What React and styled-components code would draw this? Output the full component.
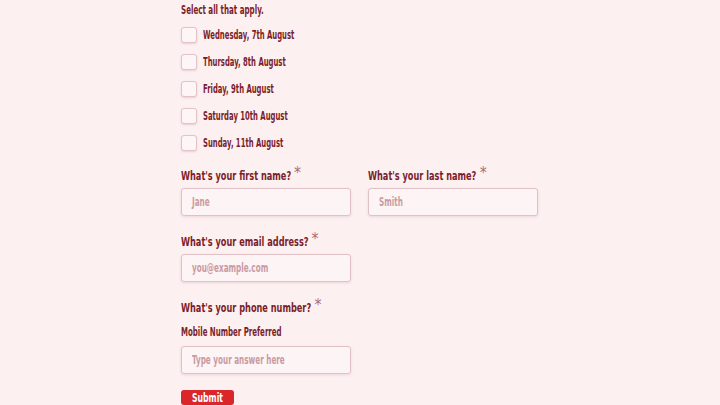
import React from "react";
import styled, { createGlobalStyle } from "styled-components";

const GlobalStyle = createGlobalStyle`
  html, body {
    margin: 0;
    padding: 0;
    background: #fdf0f1;
  }
  body {
    font-family: "DejaVu Sans Condensed", "DejaVu Sans", sans-serif;
    font-stretch: condensed;
    color: #7a1d2a;
  }
`;

const days = [
  "Wednesday, 7th August",
  "Thursday, 8th August",
  "Friday, 9th August",
  "Saturday 10th August",
  "Sunday, 11th August",
];

// squeezes the text to get near the tall, narrow face of the original
const Narrow = styled.span`
  display: inline-block;
  white-space: nowrap;
  transform: scaleX(${(p) => p.$scale || 0.68});
  transform-origin: left center;
`;

const Page = styled.div`
  width: 720px;
  height: 405px;
  overflow: hidden;
  padding: 2px 0 0 181px;
  box-sizing: border-box;
  display: flex;
  flex-direction: column;
  align-items: flex-start;
`;

const Hint = styled.p`
  margin: 0 0 9px;
  font-size: 12px;
  font-weight: bold;
  line-height: 16px;
`;

const CheckList = styled.div`
  display: flex;
  flex-direction: column;
  gap: 11px;
  margin-bottom: 15px;
`;

const CheckRow = styled.label`
  display: flex;
  align-items: center;
  gap: 6px;
  font-size: 12px;
  font-weight: bold;
  height: 16px;
`;

const Box = styled.span`
  width: 16px;
  height: 16px;
  box-sizing: border-box;
  border: 1px solid #e2c3c8;
  border-radius: 3px;
  background: #fdf5f6;
  box-shadow: 0 1px 2px rgba(122, 29, 42, 0.15);
  flex-shrink: 0;
`;

const Row = styled.div`
  display: flex;
  gap: 17px;
`;

const Field = styled.div`
  width: 170px;
  display: flex;
  flex-direction: column;
  margin-bottom: 16px;
`;

const Label = styled.div`
  font-size: 13px;
  font-weight: bold;
  line-height: 20px;
  height: 20px;
  margin-bottom: 2px;
`;

const Star = styled.span`
  display: inline-block;
  color: #a56e77;
  font-size: 16px;
  font-weight: normal;
  vertical-align: top;
  line-height: 13px;
  margin-left: 6px;
  transform: scaleX(1.4);
`;

const Sub = styled.div`
  font-size: 12px;
  font-weight: bold;
  line-height: 16px;
  margin: 4px 0 6px;
`;

const Input = styled.div`
  width: 170px;
  height: 28px;
  box-sizing: border-box;
  border: 1px solid #e2c1c6;
  border-radius: 3px;
  background: #fdf4f5;
  box-shadow: 0 1px 3px rgba(122, 29, 42, 0.12);
  padding: 0 10px;
  display: flex;
  align-items: center;
  font-size: 12px;
  font-weight: bold;
  color: #c99aa2;
`;

const Submit = styled.button`
  background: #d8262b;
  color: #fff;
  border: none;
  border-radius: 3px;
  width: 53px;
  height: 32px;
  padding: 0 0 0 11px;
  text-align: left;
  font-family: inherit;
  font-stretch: condensed;
  font-weight: bold;
  font-size: 13px;
`;

const Question = ({ label, sub, placeholder }) => (
  <Field>
    <Label>
      <Narrow $scale={0.7}>
        {label}
        <Star>*</Star>
      </Narrow>
    </Label>
    {sub && (
      <Sub>
        <Narrow $scale={0.65}>{sub}</Narrow>
      </Sub>
    )}
    <Input>
      <Narrow $scale={0.67}>{placeholder}</Narrow>
    </Input>
  </Field>
);

export default function App() {
  return (
    <Page>
      <GlobalStyle />
      <Hint>
        <Narrow $scale={0.66}>Select all that apply.</Narrow>
      </Hint>
      <CheckList>
        {days.map((d) => (
          <CheckRow key={d}>
            <Box />
            <Narrow $scale={0.635}>{d}</Narrow>
          </CheckRow>
        ))}
      </CheckList>
      <Row>
        <Question label="What's your first name?" placeholder="Jane" />
        <Question label="What's your last name?" placeholder="Smith" />
      </Row>
      <Question label="What's your email address?" placeholder="you@example.com" />
      <Question
        label="What's your phone number?"
        sub="Mobile Number Preferred"
        placeholder="Type your answer here"
      />
      <Submit>
        <Narrow $scale={0.66}>Submit</Narrow>
      </Submit>
    </Page>
  );
}
